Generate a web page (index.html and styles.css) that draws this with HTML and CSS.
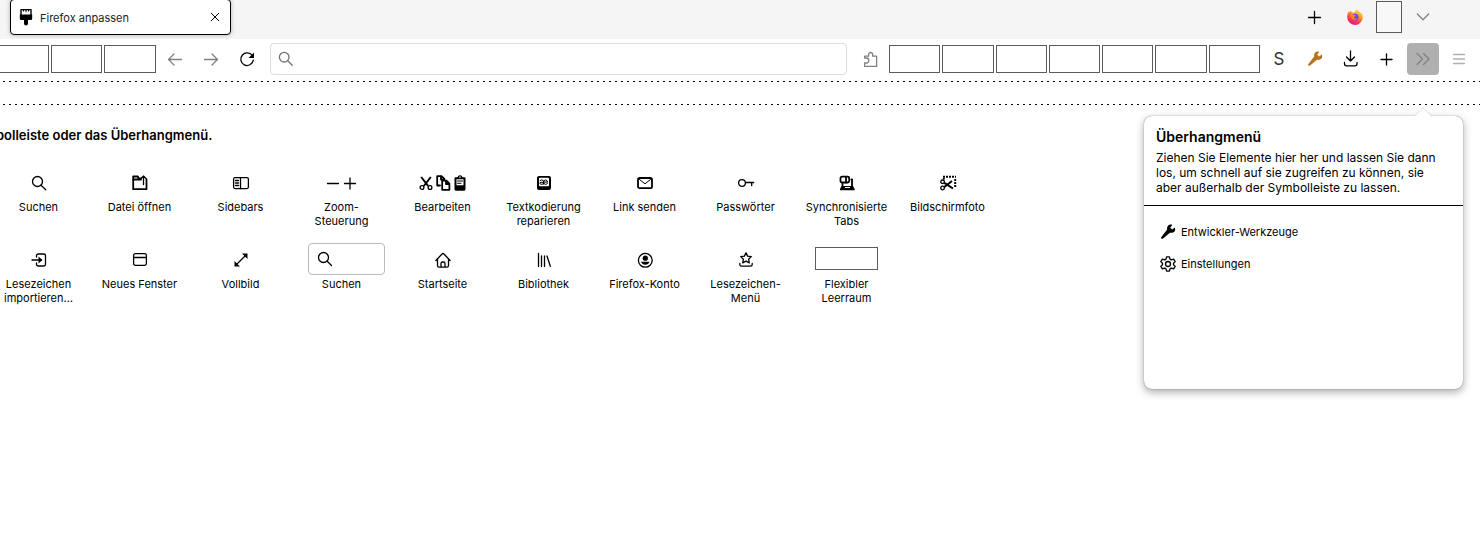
FILE: index.html
```html
<!DOCTYPE html>
<html lang="de">
<head>
<meta charset="utf-8">
<title>Firefox anpassen</title>
<link rel="stylesheet" href="styles.css">
</head>
<body>
<header class="tabbar">
  <div class="tab">
    <svg class="icon" viewBox="0 0 16 16"><path d="M3 .6h10v6H3z" fill="none" stroke="currentColor" stroke-width="1.400" stroke-linejoin="round"/><path d="M1.800 5.500h12.400v4q0 1.500-1.500 1.500H10v3.500a2 2 0 0 1-4 0V11H3.300Q1.800 11 1.800 9.500zM5 1h1v1.500H5zM7.500 1h1v2.200h-1zM10 1h1v1.500h-1z" fill="currentColor"/></svg>
    <span class="tab-title">Firefox anpassen</span>
    <button class="tab-close" aria-label="Tab schließen"><svg class="icon" viewBox="0 0 16 16"><path d="M4.200 4.200l7.600 7.600M11.800 4.200l-7.600 7.600" class="line"/></svg></button>
  </div>
  <div class="tab-tools">
    <button class="tool" aria-label="Neuer Tab"><svg class="icon" viewBox="0 0 16 16"><path d="M7.500 2.500v12M1.500 8.500h12" class="line mid"/></svg></button>
    <button class="tool tool-account" aria-label="Firefox"><svg class="icon" viewBox="0 0 16 16">
      <defs><linearGradient id="flame" x1=".8" y1="0" x2=".3" y2="1"><stop offset="0" stop-color="#fff044"/><stop offset=".4" stop-color="#ff9a24"/><stop offset=".7" stop-color="#ff3b4a"/><stop offset="1" stop-color="#e31587"/></linearGradient></defs>
      <path d="M15.300 5.500c-.4-.9-1-1.700-1.700-2.100l.2 1C12.700 2.600 10.500 2 10.400 0 8.900.7 8 2.100 7.800 3.300L5.600 3.600C4.500 3.100 4 2.300 4 1.500 3 2 2.500 2.700 2.200 3.500L1.800 2.200C.9 3.300.2 5.600.2 8a7.800 7.800 0 0 0 15.600.3c0-1-.1-2-.5-2.800z" fill="url(#flame)"/>
      <circle cx="8.100" cy="8.200" r="3.400" fill="#7543e3"/><path d="M3.200 5.600c1.500-.8 3-.4 3.700.5 1 0 1.900.1 1.900.5-.1.800-1.800 1-1.900 2 .4 1.300 2 1.300 3.400.7-.6 2-4.600 2.300-6.200-.3z" fill="#ff8130"/></svg></button>
    <span class="spacer-tall"></span>
    <button class="tool dim" aria-label="Alle Tabs auflisten"><svg class="icon" viewBox="0 0 16 16"><path d="M2.300 5l5.700 5.700L13.700 5" class="line mid"/></svg></button>
  </div>
</header>

<nav class="toolbar">
  <div class="springs springs-left"><span></span><span></span><span></span></div>
  <div class="tools">
    <button class="tool dim" aria-label="Zurück"><svg class="icon" viewBox="0 0 16 16"><path d="M14.500 8.500H1.500M7 3L1.500 8.500 7 14" class="line mid"/></svg></button>
    <button class="tool dim" aria-label="Vor"><svg class="icon" viewBox="0 0 16 16"><path d="M1.500 8.500h13M9 3l5.500 5.500L9 14" class="line mid"/></svg></button>
    <button class="tool" aria-label="Neu laden"><svg class="icon" viewBox="0 0 16 16"><path d="M13.500 5A6.300 6.300 0 1 0 14.300 9.200" class="line mid"/><path d="M15 1.500V7H9.500z" fill="currentColor"/></svg></button>
  </div>
  <label class="urlbar"><svg class="icon" viewBox="0 0 16 16"><circle cx="6.200" cy="6.200" r="4.800" class="line mid"/><path d="M9.800 9.800l4.400 4.400" class="line mid"/></svg><input type="text" aria-label="Adresse"></label>
  <button class="tool dim" aria-label="Erweiterungen"><svg class="icon" viewBox="0 0 16 16"><path d="M1.600 7V5.200h4V3.500a2 2 0 0 1 4 0v1.700h4v10.200h-12v-3.400h1.700a1.800 1.800 0 0 0 0-5z" class="line mid"/></svg></button>
  <div class="springs springs-right"><span></span><span></span><span></span><span></span><span></span><span></span><span></span></div>
  <div class="tools">
    <button class="tool letter">S</button>
    <button class="tool tool-dev" aria-label="Entwickler-Werkzeuge"><svg class="icon" viewBox="0 0 16 16"><path d="M14.700 3.500l-2.600 2-1.900-1.700 2-2.900C9.500-.3 6.900 1.600 7.100 4.600c.1.700.1 1-.3 1.500L1.200 13.200a1.100 1.100 0 0 0 1.500 1.500l7-5.600c.5-.4.900-.4 1.500-.3 3.100.3 5-2.500 3.500-5.300z" fill="currentColor"/></svg></button>
    <button class="tool" aria-label="Downloads"><svg class="icon" viewBox="0 0 16 16"><path d="M7.500 0v10M3.500 6l4 4 4-4M1.500 11.500v1.300a2 2 0 0 0 2 2h8.500a2 2 0 0 0 2-2v-1.300" class="line mid"/></svg></button>
    <button class="tool" aria-label="Hinzufügen"><svg class="icon" viewBox="0 0 16 16"><path d="M7.500 3v11M2 8.500h11" class="line mid"/></svg></button>
    <button class="tool dim tool-open" aria-label="Überhangmenü"><svg class="icon" viewBox="0 0 16 16"><path d="M2 2.500l5.500 5.500L2 13.500M8.500 2.500L14 8l-5.500 5.500" class="line mid"/></svg></button>
    <button class="tool faint" aria-label="Menü"><svg class="icon" viewBox="0 0 16 16"><path d="M2.500 3.500h11M2.500 8h11M2.500 12.500h11" class="line mid"/></svg></button>
  </div>
</nav>
<div class="bookmarks-bar"></div>

<main class="customize">
  <h1 class="customize-title">bolleiste oder das Überhangmenü.</h1>
  <div class="palette">
    <button class="item"><span class="item-art"><svg class="icon" viewBox="0 0 16 16"><circle cx="6.500" cy="6.500" r="5" class="line mid"/><path d="M10 10.200L14.800 14.800" class="line mid"/></svg></span>Suchen</button>
    <button class="item"><span class="item-art"><svg class="icon" viewBox="0 0 16 16"><path d="M8.500 3.500H6.800L5.800 1.500H1.200v12.700h13.300V4.500M1 4.500h8" class="line heavy"/><path d="M11.500 9.500V1M8.800 3.700l2.700-2.700 2.700 2.700" class="line mid"/></svg></span>Datei öffnen</button>
    <button class="item"><span class="item-art"><svg class="icon" viewBox="0 0 16 16"><rect x=".6" y="2.600" width="14.800" height="11" rx="1.500" class="line mid"/><path d="M7.500 3v10.500M2.500 5.500h3M2.500 8h3M2.500 10.500h3" class="line mid"/></svg></span>Sidebars</button>
    <button class="item"><span class="item-art"><svg class="icon" viewBox="0 0 16 16"><path d="M2.500 8.500h11" class="line mid"/></svg><svg class="icon" viewBox="0 0 16 16"><path d="M2.500 8.500h11M8 3v11" class="line mid"/></svg></span>Zoom-<br>Steuerung</button>
    <button class="item"><span class="item-art"><svg class="icon" viewBox="0 0 16 16"><path d="M3.200 2l7 9M12.800 2l-7 9" class="line blade"/><circle cx="4" cy="12.500" r="1.900" class="line mid"/><circle cx="12" cy="12.500" r="1.900" class="line mid"/></svg><svg class="icon" viewBox="0 0 16 16"><path d="M5 10.500H2.200V1.200h4.300l2.800 2.500V5" class="line heavy"/><path d="M7.200 5.700h4.200l3 3v6.100H7.200zM11 6v3h3M6 1.500v3h3" class="line heavy"/></svg><svg class="icon" viewBox="0 0 16 16"><path d="M3.500 2.300h2Q5.700.3 8 .3t2.500 2h2q1 0 1 1v11q0 1.400-1.400 1.400H3.900q-1.400 0-1.400-1.400v-11q0-1 1-1z" fill="currentColor"/><path d="M4.500 4.200h7v6h-7zM7.300 1.500h1.400v1.200H7.300z" fill="#fff"/><path d="M5.500 6h5M5.500 8.300h3.500" class="line"/></svg></span>Bearbeiten</button>
    <button class="item"><span class="item-art"><svg class="icon" viewBox="0 0 16 16"><rect x="1" y="1" width="14" height="14" rx="2" fill="currentColor"/><rect x="3" y="2.700" width="10" height="8.500" rx="1" fill="#fff"/><path d="M4 5.500q2-1.500 3.500.2V9M7.500 7.300H5q-1.300.2-1.200 1.200.5 1.500 3.700.4M7.500 7q.2-2 2-2T11.700 7.100H7.500q.2 2.200 2 2.200 1.300 0 2-.8" class="line"/></svg></span>Textkodierung<br>reparieren</button>
    <button class="item"><span class="item-art"><svg class="icon" viewBox="0 0 16 16"><rect x="1" y="3" width="14" height="10.200" rx="1.800" class="line heavy"/><path d="M2.500 4.500L8 8.800l5.500-4.300" class="line"/></svg></span>Link senden</button>
    <button class="item"><span class="item-art"><svg class="icon" viewBox="0 0 16 16"><circle cx="4" cy="8" r="3.400" class="line mid"/><path d="M7.500 7.500h8.200M13.700 7.500v3.200" class="line mid"/></svg></span>Passwörter</button>
    <button class="item"><span class="item-art"><svg class="icon" viewBox="0 0 16 16"><rect x="1.500" y="1.700" width="8.700" height="5.800" rx="1.500" class="line heavy"/><path d="M7 2v5.500M13 4.500v6.500M3.500 8v3" class="line heavy"/><path d="M12 4.500h1" class="line mid"/><path d="M2.500 11h11.500l1.700 3v1.300H1V14z" fill="currentColor"/><path d="M6 12.500h5" stroke="#fff"/></svg></span>Synchronisierte<br>Tabs</button>
    <button class="item"><span class="item-art"><svg class="icon" viewBox="0 0 16 16"><path d="M3 1.800h13M15.200 4v8M3.800 3v1.500" class="line dots"/><circle cx="2.600" cy="6.800" r="1.800" class="line mid"/><circle cx="2.600" cy="13" r="1.800" class="line mid"/><path d="M4.300 12L12 6M4.300 7.800L13 13.500" class="line blade"/></svg></span>Bildschirmfoto</button>
    <button class="item"><span class="item-art"><svg class="icon" viewBox="0 0 16 16"><path d="M5.500 5V3.700q0-1.700 1.700-1.700h5.600q1.700 0 1.700 1.700v8.600q0 1.700-1.700 1.700H7.200q-1.700 0-1.700-1.700V11M1 8h9" class="line mid"/><path d="M7.500 4.500L11.500 8l-4 3.500z" fill="currentColor"/></svg></span>Lesezeichen<br>importieren…</button>
    <button class="item"><span class="item-art"><svg class="icon" viewBox="0 0 16 16"><rect x="1.600" y="1.600" width="12.800" height="11.800" rx="1.800" class="line mid"/><path d="M2 5.500h12" class="line mid"/></svg></span>Neues Fenster</button>
    <button class="item"><span class="item-art"><svg class="icon" viewBox="0 0 16 16"><path d="M4 12l8.500-8.500" class="line mid"/><path d="M9 1.500h5.500V7zM1.500 9v5.500H7z" fill="currentColor"/></svg></span>Vollbild</button>
    <label class="item"><span class="item-art"><span class="searchbox"><svg class="icon" viewBox="0 0 16 16"><circle cx="6.500" cy="6.500" r="5" class="line mid"/><path d="M10.200 10.200L14.500 14.500" class="line mid"/></svg><input type="text"></span></span>Suchen</label>
    <button class="item"><span class="item-art"><svg class="icon" viewBox="0 0 16 16"><path d="M.9 8.500L7 2q1-1 2 0l6.100 6.500M2.500 7v6.500q0 1.700 1.700 1.700h7.600q1.700 0 1.700-1.700V7M6 15v-3.500q0-1.500 1.500-1.500h1q1.500 0 1.500 1.500V15" class="line mid"/></svg></span>Startseite</button>
    <button class="item"><span class="item-art"><svg class="icon" viewBox="0 0 16 16"><path d="M2.500 1.500v13M5.500 4v10.500M8.500 4v10.500M11 4l3.300 10.300" class="line mid"/></svg></span>Bibliothek</button>
    <button class="item"><span class="item-art"><svg class="icon" viewBox="0 0 16 16"><circle cx="8.300" cy="8.300" r="6.900" class="line mid"/><circle cx="8.300" cy="6.200" r="2.600" fill="currentColor"/><path d="M4.100 9.800h8.400q-1 3-4.200 3t-4.200-3z" fill="currentColor"/></svg></span>Firefox-Konto</button>
    <button class="item"><span class="item-art"><svg class="icon" viewBox="0 0 16 16"><path d="M8 .8l1.600 3.300 3.700.5-2.700 2.600.7 3.700L8 9.200l-3.300 1.700.7-3.700-2.700-2.600 3.700-.5zM1.800 11.500v1q0 1.700 1.700 1.700h9q1.700 0 1.700-1.700v-1" class="line mid"/></svg></span>Lesezeichen-<br>Menü</button>
    <button class="item"><span class="item-art"><span class="flex-space"></span></span>Flexibler<br>Leerraum</button>
  </div>
</main>

<aside class="panel">
  <svg class="panel-arrow" viewBox="0 0 18 10"><path d="M0 10L9 1l9 9z" fill="#fff"/><path d="M0 9.500L9 .7l9 8.800" fill="none" stroke="#ddd"/></svg>
  <div class="panel-head">
    <h2 class="panel-title">Überhangmenü</h2>
    <p class="panel-text">Ziehen Sie Elemente hier her und lassen Sie dann los, um schnell auf sie zugreifen zu können, sie aber außerhalb der Symbolleiste zu lassen.</p>
  </div>
  <div class="panel-list">
    <button class="panel-item"><svg class="icon" viewBox="0 0 16 16"><path d="M14.700 3.500l-2.600 2-1.900-1.700 2-2.900C9.500-.3 6.900 1.600 7.100 4.600c.1.700.1 1-.3 1.500L1.200 13.200a1.100 1.100 0 0 0 1.500 1.500l7-5.600c.5-.4.900-.4 1.500-.3 3.100.3 5-2.500 3.500-5.300z" fill="currentColor"/></svg>Entwickler-Werkzeuge</button>
    <button class="panel-item"><svg class="icon" viewBox="0 0 16 16"><circle cx="8" cy="8" r="2.500" class="line mid"/><path d="M6.600.8h2.800l.6 2.300 1.300.8 2.300-.8 1.600 2.500L13.500 7.300v1.400l1.700 1.700-1.600 2.500-2.300-.8-1.300.8-.6 2.300H6.600L6 12.900l-1.300-.8-2.300.8L.8 10.400l1.700-1.700V7.300L.8 5.600l1.600-2.500 2.300.8L6 3.100z" class="line mid"/></svg>Einstellungen</button>
  </div>
</aside>
</body>
</html>
```
FILE: styles.css
```css
* { box-sizing: border-box; }

body {
  margin: 0;
  position: relative;
  min-height: 100vh;
  overflow-x: hidden;
  background: #fff;
  color: #000;
  font: 11px/14px Inter, "Liberation Sans", sans-serif;
}

button {
  margin: 0;
  padding: 0;
  border: 0;
  background: none;
  color: inherit;
  font: inherit;
}

input {
  flex: 1;
  min-width: 0;
  border: 0;
  padding: 0;
  outline: 0;
  background: none;
  font: inherit;
}

.icon { width: 16px; height: 16px; flex: none; display: block; overflow: visible; }
.line { fill: none; stroke: currentColor; stroke-width: 1; stroke-linecap: round; stroke-linejoin: round; }
.mid { stroke-width: 1.3; }
.heavy { stroke-width: 1.8; }
.blade { stroke-width: 2; stroke-linecap: butt; }
.dots { stroke-width: 2; stroke-dasharray: 2 1; stroke-linecap: butt; }

.tabbar {
  display: flex;
  justify-content: space-between;
  align-items: flex-start;
  height: 39px;
  padding: 0 41px 0 10px;
  background: #f5f5f5;
}

.tab {
  display: flex;
  align-items: center;
  gap: 6px;
  width: 221px;
  height: 36px;
  margin-top: -1px;
  padding: 0 7px;
  border: 1px solid #000;
  border-radius: 4px;
  background: #fff;
  box-shadow: 0 0 4px rgba(0, 0, 0, .3);
}
.tab-title { flex: 1; padding-top: 2px; color: #222; }

.tab-tools { display: flex; align-items: center; padding-top: 1px; }
.tool-account { margin: 0 5px 0 8px; }
.spacer-tall { width: 26px; height: 32px; margin-right: 5px; border: 1px solid #5b5b5b; background: #f8f8f8; }

.tool {
  display: flex;
  flex: none;
  align-items: center;
  justify-content: center;
  width: 32px;
  height: 32px;
  border-radius: 4px;
}
.dim { color: #808080; }
.faint { color: #b0b0b0; }
.letter { color: #333; font-size: 17px; font-weight: 400; }
.tool-dev { color: #b87420; }
.tool-open { background: #b0b0b0; }

.toolbar {
  display: flex;
  align-items: center;
  height: 42px;
  padding: 0 5px 2px 0;
}
.tools { display: flex; gap: 4px; }

.springs { display: flex; gap: 2px; height: 28px; }
.springs span { flex: 1; border: 1px solid #5b5b5b; }
.springs-left { flex: 3 1 159px; margin: 0 3px 0 -3px; }
.springs-right { flex: 7 1 371px; margin: 0 3px 0 2px; }

.urlbar {
  display: flex;
  flex: 10 1 577px;
  align-items: center;
  gap: 8px;
  height: 32px;
  margin: 0 8px 0 7px;
  padding: 0 7px;
  border: 1px solid #ddd;
  border-radius: 4px;
  color: #707070;
}

.bookmarks-bar {
  --dash: repeating-linear-gradient(to right, transparent 0 3px, #000 3px 5px, transparent 5px 6px);
  height: 24px;
  background: var(--dash) top / 100% 1px no-repeat, var(--dash) bottom / 100% 1px no-repeat;
}

.customize { padding-top: 20px; }
.customize-title { margin: 0 0 21px -4px; font-size: 13px; line-height: 20px; font-weight: 600; }

.palette {
  display: flex;
  flex-wrap: wrap;
  row-gap: 15px;
  max-width: 1010px;
  margin-left: -12px;
}
.item {
  display: flex;
  flex-direction: column;
  align-items: center;
  gap: 2px;
  width: 101px;
  min-height: 62px;
  text-align: center;
}
.item-art { display: flex; align-items: center; justify-content: center; gap: 1px; height: 32px; padding-top: 2px; }
.searchbox {
  display: flex;
  align-items: center;
  width: 77px;
  height: 32px;
  margin: -2px 0 0 10px;
  padding: 0 8px;
  border: 1px solid #bbb;
  border-radius: 4px;
}
.flex-space { width: 63px; height: 23px; margin-top: -4px; border: 1px solid #5b5b5b; }

.panel {
  position: absolute;
  top: 116px;
  right: 17px;
  width: 319px;
  min-height: 273px;
  border-radius: 8px;
  background: #fff;
  box-shadow: 0 0 1px rgba(0, 0, 0, .6), 0 3px 9px rgba(0, 0, 0, .35);
}
.panel-arrow { position: absolute; top: -9px; right: 31px; width: 18px; height: 10px; }
.panel-head { padding: 11px 12px 10px; border-bottom: 1px solid #000; }
.panel-title { margin: 0 0 3px; font-size: 14px; line-height: 20px; font-weight: 600; }
.panel-text { margin: 0; padding-right: 8px; font-size: 12px; line-height: 15px; }
.panel-list { padding: 10px 8px; }
.panel-item { display: flex; align-items: center; gap: 5px; width: 100%; height: 32px; padding: 0 8px; text-align: left; }
```
